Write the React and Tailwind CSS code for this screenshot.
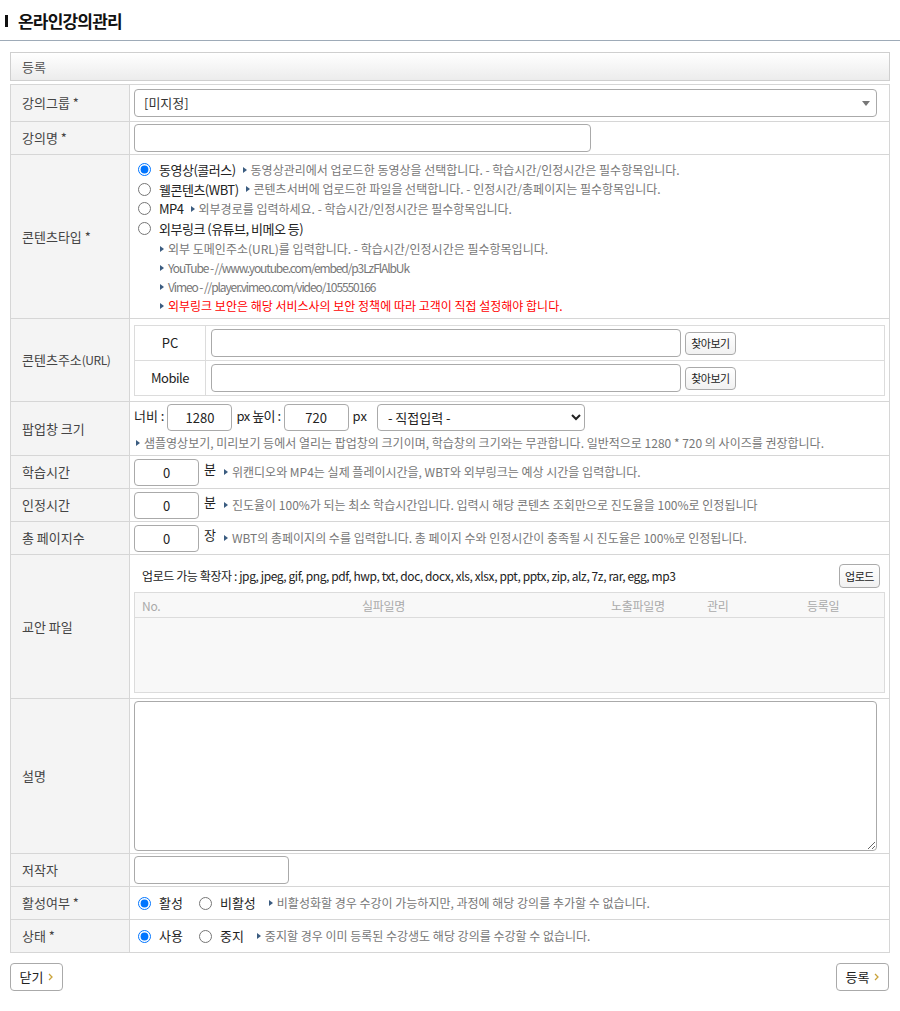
import React from "react";

function Tri() {
  return (
    <span className="inline-block w-0 h-0 border-y-[3.5px] border-y-transparent border-l-[4px] border-l-[#3b5c80] mr-[4px] shrink-0" />
  );
}

function Help({ children, className = "" }) {
  return (
    <span className={"inline-flex items-center text-[12px] text-[#777] whitespace-nowrap " + className}>
      <Tri />
      {children}
    </span>
  );
}

function Row({ label, h, children, cellClass = "" }) {
  return (
    <div className={"flex border-b border-[#d6d6d6] " + h}>
      <div className="w-[119px] shrink-0 bg-[#f4f4f4] border-r border-[#d6d6d6] flex items-center pl-[11px] text-[13px] text-[#444]">
        {label}
      </div>
      <div className={"flex-1 min-w-0 bg-white pl-[4px] " + cellClass}>{children}</div>
    </div>
  );
}

function Radio({ checked, name }) {
  return (
    <input
      type="radio"
      name={name}
      defaultChecked={checked}
      className="m-0 w-[13px] h-[13px] shrink-0 accent-[#0075ff]"
    />
  );
}

function SmallBtn({ children, className = "" }) {
  return (
    <button className={"h-[23px] px-0 border border-[#aaa] rounded-[4px] bg-gradient-to-b from-white to-[#f1f1f1] text-[11px] tracking-[-0.5px] whitespace-nowrap text-[#222] leading-none " + className}>
      {children}
    </button>
  );
}

function Chevron() {
  return (
    <svg width="5" height="8" viewBox="0 0 5 8" className="ml-[5px]">
      <path d="M1 1 L4 4 L1 7" fill="none" stroke="#c9a33a" strokeWidth="1.3" />
    </svg>
  );
}

export default function App() {
  return (
    <div className="w-[900px] bg-white font-['Noto_Sans_CJK_KR','Noto_Sans',sans-serif] text-[#222]">
      {/* Title */}
      <div className="h-[41px] border-b border-[#9eabb8] flex items-center pl-[5px]">
        <span className="inline-block w-[3px] h-[12px] bg-[#111] mr-[10px] mt-[2px]" />
        <h1 className="text-[17px] font-bold text-[#111] leading-none tracking-[-0.8px]">온라인강의관리</h1>
      </div>

      <div className="mx-[10px] w-[880px]">
        {/* Box header */}
        <div className="mt-[11px] h-[29px] border border-[#cfcfcf] bg-gradient-to-b from-white to-[#ececec] flex items-center pl-[11px] text-[13px] text-[#555]">
          등록
        </div>

        {/* Table */}
        <div className="mt-[3px] border-t border-l border-r border-[#d6d6d6]">
          <Row label="강의그룹 *" h="h-[37px]" cellClass="flex items-center">
            <div className="relative w-[743px] h-[28px] border border-[#aaa] rounded-[4px] flex items-center pl-[9px] text-[13px] text-[#333]">
              [미지정]
              <span className="absolute right-[6px] top-[11px] w-0 h-0 border-x-[4px] border-x-transparent border-t-[5px] border-t-[#777]" />
            </div>
          </Row>

          <Row label="강의명 *" h="h-[33px]" cellClass="flex items-center">
            <input className="w-[457px] h-[28px] border border-[#aaa] rounded-[4px] outline-none" />
          </Row>

          <Row label="콘텐츠타입 *" h="h-[164px]" cellClass="pt-[5px]">
            <div className="flex items-center h-[19.5px] pl-[4px]">
              <Radio name="ct" checked />
              <span className="ml-[8px] text-[13px] text-[#222] mr-[7px] tracking-[-0.5px]">동영상(콜러스)</span>
              <Help>동영상관리에서 업로드한 동영상을 선택합니다. - 학습시간/인정시간은 필수항목입니다.</Help>
            </div>
            <div className="flex items-center h-[19.5px] pl-[4px]">
              <Radio name="ct" />
              <span className="ml-[8px] text-[13px] text-[#222] mr-[7px] tracking-[-0.5px]">웰콘텐츠(WBT)</span>
              <Help>콘텐츠서버에 업로드한 파일을 선택합니다. - 인정시간/총페이지는 필수항목입니다.</Help>
            </div>
            <div className="flex items-center h-[19.5px] pl-[4px]">
              <Radio name="ct" />
              <span className="ml-[8px] text-[13px] text-[#222] mr-[7px] tracking-[-0.5px]">MP4</span>
              <Help>외부경로를 입력하세요. - 학습시간/인정시간은 필수항목입니다.</Help>
            </div>
            <div className="flex items-center h-[19.5px] pl-[4px]">
              <Radio name="ct" />
              <span className="ml-[8px] text-[13px] text-[#222] tracking-[-0.5px]">외부링크 (유튜브, 비메오 등)</span>
            </div>
            <div className="mt-[1px] pl-[26px]">
              <div className="flex items-center h-[19px]">
                <Help>외부 도메인주소(URL)를 입력합니다. - 학습시간/인정시간은 필수항목입니다.</Help>
              </div>
              <div className="flex items-center h-[19px]">
                <Help className="tracking-[-1.1px]">YouTube - //www.youtube.com/embed/p3LzFlAlbUk</Help>
              </div>
              <div className="flex items-center h-[19px]">
                <Help className="tracking-[-1.1px]">Vimeo - //player.vimeo.com/video/105550166</Help>
              </div>
              <div className="flex items-center h-[19px]">
                <Help className="!text-[#ff0000]">외부링크 보안은 해당 서비스사의 보안 정책에 따라 고객이 직접 설정해야 합니다.</Help>
              </div>
            </div>
          </Row>

          <Row label={<span>콘텐츠주소<span className="text-[12px] tracking-[-0.5px]">(URL)</span></span>} h="h-[83px]" cellClass="pt-[6px] pr-[4px]">
            <div className="border border-[#dcdcdc]">
              <div className="flex h-[35px] border-b border-[#dcdcdc]">
                <div className="w-[71px] border-r border-[#dcdcdc] flex items-center justify-center text-[13px] text-[#222]">PC</div>
                <div className="flex items-center pl-[5px]">
                  <input className="w-[470px] h-[28px] border border-[#aaa] rounded-[4px] outline-none" />
                  <SmallBtn className="ml-[4px] w-[51px]">찾아보기</SmallBtn>
                </div>
              </div>
              <div className="flex h-[34px]">
                <div className="w-[71px] border-r border-[#dcdcdc] flex items-center justify-center text-[13px] text-[#222] tracking-[-0.5px]">Mobile</div>
                <div className="flex items-center pl-[5px]">
                  <input className="w-[470px] h-[28px] border border-[#aaa] rounded-[4px] outline-none" />
                  <SmallBtn className="ml-[4px] w-[51px]">찾아보기</SmallBtn>
                </div>
              </div>
            </div>
          </Row>

          <Row label="팝업창 크기" h="h-[54px]" cellClass="pt-[2px]">
            <div className="flex items-start h-[28px] text-[13px] text-[#222]">
              <span className="mt-[2px] mr-[3px]">너비 :</span>
              <input defaultValue="1280" className="w-[65px] h-[27px] border border-[#aaa] rounded-[4px] text-center text-[13px] outline-none" />
              <span className="mt-[2px] ml-[4px] mr-[3px] tracking-[-0.5px]">px 높이 :</span>
              <input defaultValue="720" className="w-[65px] h-[27px] border border-[#aaa] rounded-[4px] text-center text-[13px] outline-none" />
              <span className="mt-[2px] ml-[4px] mr-[10px]">px</span>
              <select className="w-[208px] h-[27px] border border-[#aaa] rounded-[4px] text-[13px] pl-[6px] text-[#222] outline-none">
                <option>- 직접입력 -</option>
              </select>
            </div>
            <div className="flex items-center h-[22px] pl-[2px]">
              <Help>샘플영상보기, 미리보기 등에서 열리는 팝업창의 크기이며, 학습창의 크기와는 무관합니다. 일반적으로 1280 * 720 의 사이즈를 권장합니다.</Help>
            </div>
          </Row>

          {[
            ["학습시간", "분", "위캔디오와 MP4는 실제 플레이시간을, WBT와 외부링크는 예상 시간을 입력합니다."],
            ["인정시간", "분", "진도율이 100%가 되는 최소 학습시간입니다. 입력시 해당 콘텐츠 조회만으로 진도율을 100%로 인정됩니다"],
            ["총 페이지수", "장", "WBT의 총페이지의 수를 입력합니다. 총 페이지 수와 인정시간이 충족될 시 진도율은 100%로 인정됩니다."],
          ].map(([l, u, t]) => (
            <Row key={l} label={l} h="h-[33px]" cellClass="flex items-center">
              <input defaultValue="0" className="w-[65px] h-[27px] border border-[#aaa] rounded-[4px] text-center text-[13px] outline-none" />
              <span className="ml-[5px] mr-[8px] text-[13px] text-[#222] self-start mt-[3px]">{u}</span>
              <Help>{t}</Help>
            </Row>
          ))}

          <Row label="교안 파일" h="h-[144px]" cellClass="pt-[9px] pr-[4px]">
            <div className="flex items-center justify-between h-[24px] pl-[8px] pr-[5px]">
              <span className="text-[12px] text-[#222] tracking-[-0.4px]">업로드 가능 확장자 : jpg, jpeg, gif, png, pdf, hwp, txt, doc, docx, xls, xlsx, ppt, pptx, zip, alz, 7z, rar, egg, mp3</span>
              <SmallBtn className="w-[41px] h-[24px]">업로드</SmallBtn>
            </div>
            <div className="mt-[4px] h-[101px] border border-[#dcdcdc] bg-[#f8f8f8]">
              <div className="relative h-[25px] border-b border-[#dcdcdc] text-[12px] text-[#aaa] tracking-[-0.3px]">
                <span className="absolute left-[7px] top-[4px]">No.</span>
                <span className="absolute left-[227px] top-[4px]">실파일명</span>
                <span className="absolute left-[476px] top-[4px]">노출파일명</span>
                <span className="absolute left-[572px] top-[4px]">관리</span>
                <span className="absolute left-[672px] top-[4px]">등록일</span>
              </div>
            </div>
          </Row>

          <Row label="설명" h="h-[155px]" cellClass="pt-[2px]">
            <textarea className="block w-[743px] h-[150px] border border-[#aaa] rounded-[4px] outline-none" />
          </Row>

          <Row label="저작자" h="h-[33px]" cellClass="flex items-center">
            <input className="w-[155px] h-[28px] border border-[#aaa] rounded-[4px] outline-none" />
          </Row>

          <Row label="활성여부 *" h="h-[33px]" cellClass="flex items-center pl-[8px]">
            <Radio name="act" checked />
            <span className="ml-[8px] mr-[16px] text-[13px] text-[#222]">활성</span>
            <Radio name="act" />
            <span className="ml-[8px] mr-[13px] text-[13px] text-[#222]">비활성</span>
            <Help>비활성화할 경우 수강이 가능하지만, 과정에 해당 강의를 추가할 수 없습니다.</Help>
          </Row>

          <Row label="상태 *" h="h-[33px]" cellClass="flex items-center pl-[8px]">
            <Radio name="st" checked />
            <span className="ml-[8px] mr-[16px] text-[13px] text-[#222]">사용</span>
            <Radio name="st" />
            <span className="ml-[8px] mr-[13px] text-[13px] text-[#222]">중지</span>
            <Help>중지할 경우 이미 등록된 수강생도 해당 강의를 수강할 수 없습니다.</Help>
          </Row>
        </div>

        {/* Bottom buttons */}
        <div className="flex justify-between mt-[10px] pb-[20px] w-[879px]">
          <button className="h-[28px] w-[53px] border border-[#aaa] rounded-[4px] bg-white text-[13px] text-[#222] flex items-center justify-center">
            닫기<Chevron />
          </button>
          <button className="h-[28px] w-[53px] border border-[#aaa] rounded-[4px] bg-white text-[13px] text-[#222] flex items-center justify-center">
            등록<Chevron />
          </button>
        </div>
      </div>
    </div>
  );
}
